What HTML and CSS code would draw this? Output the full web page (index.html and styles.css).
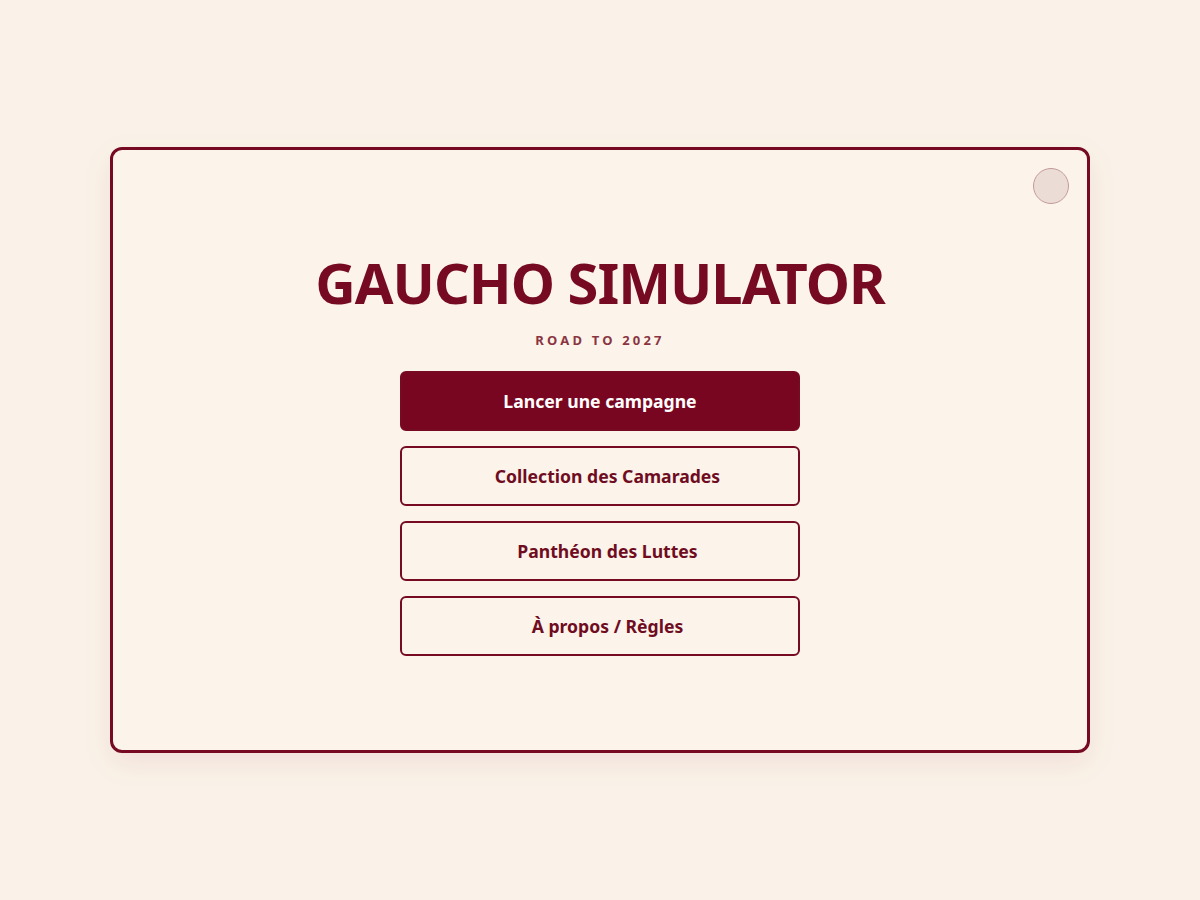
FILE: index.html
```html
<!DOCTYPE html>
<html lang="fr">
<head>
<meta charset="utf-8">
<title>Gaucho Simulator</title>
<link rel="stylesheet" href="styles.css">
</head>
<body>
<div class="page">
  <main class="card">
    <button class="corner" aria-label="Paramètres"></button>
    <h1 class="title">GAUCHO SIMULATOR</h1>
    <p class="subtitle">ROAD TO 2027</p>
    <nav class="menu">
      <button class="btn btn-primary">Lancer une campagne</button>
      <button class="btn btn-outline">Collection des Camarades</button>
      <button class="btn btn-outline">Panthéon des Luttes</button>
      <button class="btn btn-outline">À propos / Règles</button>
    </nav>
  </main>
</div>
</body>
</html>
```

FILE: styles.css
```css
html, body {
  margin: 0;
  padding: 0;
  background: #faf2e8;
  font-family: "Noto Sans", "Open Sans", sans-serif;
}
.page {
  width: 1200px;
  height: 900px;
  display: flex;
  align-items: center;
  justify-content: center;
}
.card {
  position: relative;
  box-sizing: border-box;
  width: 980px;
  height: 606px;
  border: 3px solid #760a22;
  border-radius: 12px;
  background: #fcf4ea;
  box-shadow: 0 10px 30px rgba(122, 6, 32, 0.08);
  display: flex;
  flex-direction: column;
  align-items: center;
  padding-top: 91px;
}
.corner {
  position: absolute;
  top: 18px;
  right: 18px;
  width: 36px;
  height: 36px;
  border-radius: 50%;
  border: 1px solid #c49a9c;
  background: #ecdcd6;
  padding: 0;
}
.title {
  margin: 0;
  font-size: 56px;
  line-height: 82px;
  font-weight: 700;
  color: #760a22;
  letter-spacing: -1px;
}
.subtitle {
  margin: 8px 0 0;
  font-size: 13px;
  line-height: 18px;
  font-weight: 700;
  letter-spacing: 3.2px;
  color: #8a3442;
}
.menu {
  margin-top: 22px;
  display: flex;
  flex-direction: column;
  gap: 15px;
  width: 400px;
}
.btn {
  box-sizing: border-box;
  height: 60px;
  width: 100%;
  border: 2px solid #760a22;
  border-radius: 6px;
  background: transparent;
  color: #6f0c22;
  font-family: "Noto Sans", "Open Sans", sans-serif;
  font-size: 17.6px;
  font-weight: 700;
  cursor: pointer;
  padding: 0;
}
.btn-outline {
  padding-left: 15px;
}
.btn-primary {
  background: #780620;
  color: #ffffff;
}
```
